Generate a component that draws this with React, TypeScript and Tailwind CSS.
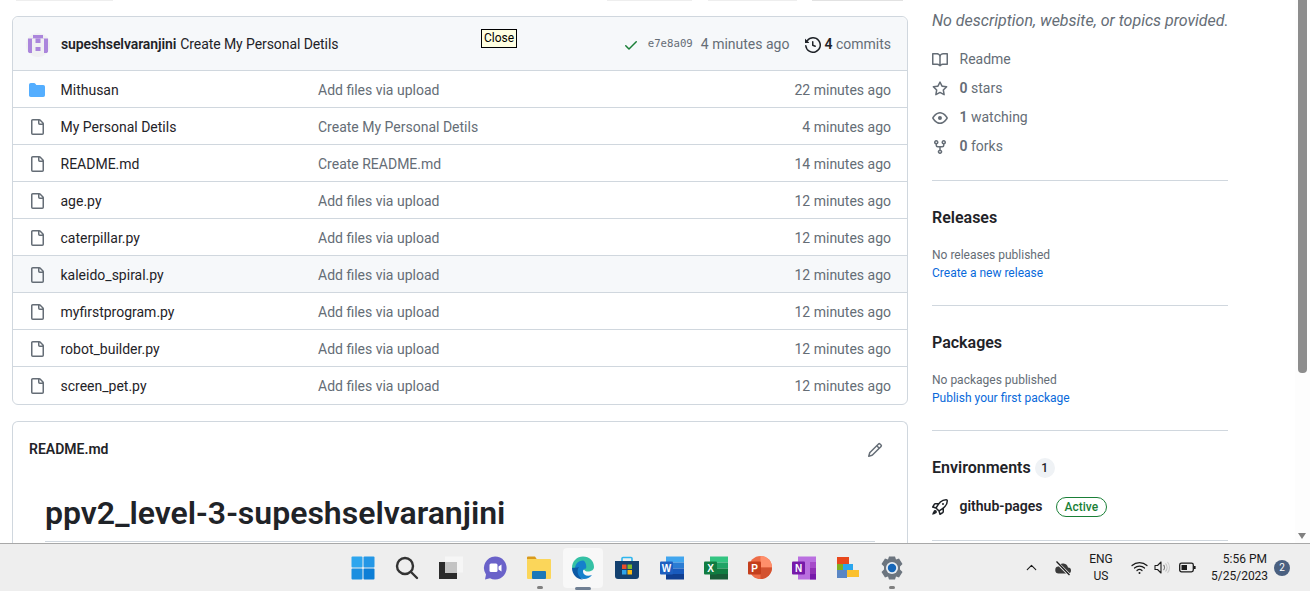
import React from "react";
import { ChevronUp } from "lucide-react";

const rows = [
  ["Mithusan", "Add files via upload", "22 minutes ago"],
  ["My Personal Detils", "Create My Personal Detils", "4 minutes ago"],
  ["README.md", "Create README.md", "14 minutes ago"],
  ["age.py", "Add files via upload", "12 minutes ago"],
  ["caterpillar.py", "Add files via upload", "12 minutes ago"],
  ["kaleido_spiral.py", "Add files via upload", "12 minutes ago"],
  ["myfirstprogram.py", "Add files via upload", "12 minutes ago"],
  ["robot_builder.py", "Add files via upload", "12 minutes ago"],
  ["screen_pet.py", "Add files via upload", "12 minutes ago"],
];

function Octicon({ d, className, fill = "currentColor" }: { d: string; className?: string; fill?: string }) {
  return (
    <svg width="16" height="16" viewBox="0 0 16 16" fill={fill} className={className}>
      <path d={d} />
    </svg>
  );
}

const P = {
  folder: "M1.75 1A1.75 1.75 0 0 0 0 2.75v10.5C0 14.216.784 15 1.75 15h12.5A1.75 1.75 0 0 0 16 13.25v-8.5A1.75 1.75 0 0 0 14.25 3H7.5a.25.25 0 0 1-.2-.1l-.9-1.2C6.07 1.26 5.55 1 5 1H1.75Z",
  file: "M2 1.75C2 .784 2.784 0 3.75 0h6.586c.464 0 .909.184 1.237.513l2.914 2.914c.329.328.513.773.513 1.237v9.586A1.75 1.75 0 0 1 13.25 16h-9.5A1.75 1.75 0 0 1 2 14.25Zm1.75-.25a.25.25 0 0 0-.25.25v12.5c0 .138.112.25.25.25h9.5a.25.25 0 0 0 .25-.25V6h-2.75A1.75 1.75 0 0 1 9 4.25V1.5Zm6.75.062V4.25c0 .138.112.25.25.25h2.688l-.011-.013-2.914-2.914-.013-.011Z",
  book: "M0 1.75A.75.75 0 0 1 .75 1h4.253c1.227 0 2.317.59 3 1.501A3.743 3.743 0 0 1 11.006 1h4.245a.75.75 0 0 1 .75.75v10.5a.75.75 0 0 1-.75.75h-4.507a2.25 2.25 0 0 0-1.591.659l-.622.621a.75.75 0 0 1-1.06 0l-.622-.621A2.25 2.25 0 0 0 5.258 13H.75a.75.75 0 0 1-.75-.75Zm7.251 10.324.004-5.073-.002-2.253A2.25 2.25 0 0 0 5.003 2.5H1.5v9h3.757a3.75 3.75 0 0 1 1.994.574ZM8.755 4.75l-.004 7.322a3.752 3.752 0 0 1 1.992-.572H14.5v-9h-3.495a2.25 2.25 0 0 0-2.25 2.25Z",
  star: "M8 .25a.75.75 0 0 1 .673.418l1.882 3.815 4.21.612a.75.75 0 0 1 .416 1.279l-3.046 2.97.719 4.192a.751.751 0 0 1-1.088.791L8 12.347l-3.766 1.98a.75.75 0 0 1-1.088-.79l.72-4.194L.818 6.374a.75.75 0 0 1 .416-1.28l4.21-.611L7.327.668A.75.75 0 0 1 8 .25Zm0 2.445L6.615 5.5a.75.75 0 0 1-.564.41l-3.097.45 2.24 2.184a.75.75 0 0 1 .216.664l-.528 3.084 2.769-1.456a.75.75 0 0 1 .698 0l2.77 1.456-.53-3.084a.75.75 0 0 1 .216-.664l2.24-2.183-3.096-.45a.75.75 0 0 1-.564-.41L8 2.694Z",
  eye: "M8 2c1.981 0 3.671.992 4.933 2.078 1.27 1.091 2.187 2.345 2.637 3.023a1.62 1.62 0 0 1 0 1.798c-.45.678-1.367 1.932-2.637 3.023C11.67 13.008 9.981 14 8 14c-1.981 0-3.671-.992-4.933-2.078C1.797 10.83.88 9.576.43 8.898a1.62 1.62 0 0 1 0-1.798c.45-.677 1.367-1.931 2.637-3.022C4.33 2.992 6.019 2 8 2ZM1.679 7.932a.12.12 0 0 0 0 .136c.411.622 1.241 1.75 2.366 2.717C5.176 11.758 6.527 12.5 8 12.5c1.473 0 2.825-.742 3.955-1.715 1.124-.967 1.954-2.096 2.366-2.717a.12.12 0 0 0 0-.136c-.412-.621-1.242-1.75-2.366-2.717C10.824 4.242 9.473 3.5 8 3.5c-1.473 0-2.825.742-3.955 1.715-1.124.967-1.954 2.096-2.366 2.717ZM8 10a2 2 0 1 1-.001-3.999A2 2 0 0 1 8 10Z",
  fork: "M5 5.372v.878c0 .414.336.75.75.75h4.5a.75.75 0 0 0 .75-.75v-.878a2.25 2.25 0 1 1 1.5 0v.878a2.25 2.25 0 0 1-2.25 2.25h-1.5v2.128a2.251 2.251 0 1 1-1.5 0V8.5h-1.5A2.25 2.25 0 0 1 3.5 6.25v-.878a2.25 2.25 0 1 1 1.5 0ZM5 3.25a.75.75 0 1 0-1.5 0 .75.75 0 0 0 1.5 0Zm6.75.75a.75.75 0 1 0 0-1.5.75.75 0 0 0 0 1.5Zm-3 8.75a.75.75 0 1 0-1.5 0 .75.75 0 0 0 1.5 0Z",
  rocket: "M14.064 0h.186C15.216 0 16 .784 16 1.75v.186a8.752 8.752 0 0 1-2.564 6.186l-.458.459c-.314.314-.641.616-.979.904v3.207c0 .608-.315 1.172-.833 1.49l-2.774 1.707a.749.749 0 0 1-1.11-.418l-.954-3.102a1.214 1.214 0 0 1-.145-.125L3.754 9.816a1.218 1.218 0 0 1-.124-.145L.528 8.717a.749.749 0 0 1-.418-1.11l1.71-2.774A1.748 1.748 0 0 1 3.31 4h3.204c.288-.338.59-.665.904-.979l.459-.458A8.749 8.749 0 0 1 14.064 0ZM8.938 3.623h-.002l-.458.458c-.76.76-1.437 1.598-2.02 2.5l-1.5 2.317 2.143 2.143 2.317-1.5c.902-.583 1.74-1.26 2.499-2.02l.459-.458a7.25 7.25 0 0 0 2.123-5.127V1.75a.25.25 0 0 0-.25-.25h-.186a7.249 7.249 0 0 0-5.125 2.123ZM3.56 14.56c-.732.732-2.334 1.045-3.005 1.148a.234.234 0 0 1-.201-.064.234.234 0 0 1-.064-.201c.103-.671.416-2.273 1.15-3.003a1.75 1.75 0 1 1 2.12 2.12Zm6.94-3.935c-.088.06-.177.118-.266.175l-2.35 1.521.548 1.783 1.949-1.2a.25.25 0 0 0 .119-.213ZM3.678 8.116 5.2 5.766c.058-.09.117-.178.176-.266H3.309a.25.25 0 0 0-.213.119l-1.2 1.95ZM12 5a1 1 0 1 1-2 0 1 1 0 0 1 2 0Z",
  history: "M1.643 3.143 .427 1.927A.25.25 0 0 0 0 2.104V5.75c0 .138.112.25.25.25h3.646a.25.25 0 0 0 .177-.427L2.715 4.215a6.5 6.5 0 1 1-1.18 4.458.75.75 0 1 0-1.493.154 8.001 8.001 0 1 0 1.6-5.684ZM7.75 4a.75.75 0 0 1 .75.75v2.992l2.028.812a.75.75 0 0 1-.557 1.392l-2.5-1A.751.751 0 0 1 7 8.25v-3.5A.75.75 0 0 1 7.75 4Z",
  pencil: "M11.013 1.427a1.75 1.75 0 0 1 2.474 0l1.086 1.086a1.75 1.75 0 0 1 0 2.474l-8.61 8.61c-.21.21-.47.364-.756.445l-3.251.93a.75.75 0 0 1-.927-.928l.929-3.25c.081-.286.235-.547.445-.758l8.61-8.61Zm.176 4.823L9.75 4.81l-6.286 6.287a.253.253 0 0 0-.064.108l-.558 1.953 1.953-.558a.253.253 0 0 0 .108-.064Zm1.238-3.763a.25.25 0 0 0-.354 0L10.811 3.75l1.439 1.44 1.263-1.263a.25.25 0 0 0 0-.354Z",
  check: "M13.78 4.22a.75.75 0 0 1 0 1.06l-7.25 7.25a.75.75 0 0 1-1.06 0L2.22 9.28a.751.751 0 0 1 .018-1.042.751.751 0 0 1 1.042-.018L6 10.94l6.72-6.72a.75.75 0 0 1 1.06 0Z",
};

function Avatar() {
  return (
    <svg width="24" height="24" viewBox="0 0 24 24" className="rounded-full">
      <rect width="24" height="24" fill="#f0f0f2" />
      <g fill="#ab86dc">
        <rect x="7" y="2" width="10" height="3.500" />
        <rect x="2" y="5.500" width="20" height="4.500" />
        <rect x="2" y="10" width="4" height="10" />
        <rect x="18" y="10" width="4" height="10" />
        <rect x="9.500" y="14" width="5" height="4" />
      </g>
      <g fill="#f0f0f2">
        <rect x="6" y="5.500" width="3.500" height="4.500" />
        <rect x="14.500" y="5.500" width="3.500" height="4.500" />
      </g>
    </svg>
  );
}

function Row({ r, hover }: { r: string[]; hover: boolean }) {
  return (
    <div className={`flex h-[37px] items-center border-t border-[#d0d7de] pl-4 pr-4 pt-[2px] ${hover ? "bg-[#f6f8fa]" : ""}`}>
      <div className="flex w-[31.500px] shrink-0">
        {r[0] === "Mithusan" ? <Octicon d={P.folder} fill="#54aeff" /> : <Octicon d={P.file} fill="#656d76" />}
      </div>
      <div className="w-[257.500px] shrink-0 text-[#1f2328]">{r[0]}</div>
      <div className="flex-1 text-[#656d76]">{r[1]}</div>
      <div className="text-[#656d76]">{r[2]}</div>
    </div>
  );
}

function Stat({ icon, children }: { icon: string; children: React.ReactNode }) {
  return (
    <div className="flex h-[29px] items-center text-[#656d76]">
      <div className="flex w-[27.500px] shrink-0"><Octicon d={icon} /></div>
      <div>{children}</div>
    </div>
  );
}

function Section({ title, text, link }: { title: string; text: string; link: string }) {
  return (
    <div className="mt-[23px] border-t border-[#d0d7de] pt-[25px]">
      <div className="text-[16px] font-semibold leading-[24px]">{title}</div>
      <div className="mt-[16px] text-[12px] leading-[18px] text-[#656d76]">{text}</div>
      <div className="text-[12px] leading-[18px] text-[#0969da]">{link}</div>
    </div>
  );
}

function Taskbar() {
  const icon = "flex h-[40px] w-[40px] items-center justify-center";
  return (
    <div className="relative flex h-[48px] shrink-0 items-center border-t border-[#a8a8a8] bg-[#eeeeee]">
      <div className="ml-[343px] flex items-center gap-[4.080px]">
        <div className={icon}>
          <svg width="24" height="24" viewBox="0 0 24 24">
            <rect x="0.500" y="0.500" width="11" height="11" rx="1" fill="#2ea6ee" />
            <rect x="12.500" y="0.500" width="11" height="11" rx="1" fill="#2497e6" />
            <rect x="0.500" y="12.500" width="11" height="11" rx="1" fill="#1b8fe0" />
            <rect x="12.500" y="12.500" width="11" height="11" rx="1" fill="#0c7ed6" />
          </svg>
        </div>
        <div className={icon}>
          <svg width="24" height="24" viewBox="0 0 24 24" fill="none" stroke="#333" strokeWidth="2.400" strokeLinecap="round">
            <circle cx="10" cy="10" r="8" />
            <path d="M16 16l6 6" />
          </svg>
        </div>
        <div className={icon}>
          <svg width="24" height="24" viewBox="0 0 24 24">
            <rect x="6" y="0.500" width="18" height="16" fill="#f6f6f6" />
            <rect x="6" y="6" width="12" height="11" fill="#c4c4c4" />
            <path d="M0 6h6v11h12v6H0z" fill="#2b2b2b" />
          </svg>
        </div>
        <div className={icon}>
          <svg width="24" height="24" viewBox="0 0 24 24">
            <path d="M12 0.500a11.500 11.500 0 1 1-5 21.800L2 23.500l1-5A11.500 11.500 0 0 1 12 0.500Z" fill="#6a62c9" />
            <rect x="6.500" y="7.500" width="8" height="8.500" rx="1.500" fill="#fff" />
            <path d="M15.500 10.500l3-2v7l-3-2z" fill="#fff" />
          </svg>
        </div>
        <div className={icon}>
          <svg width="24" height="24" viewBox="0 0 24 24">
            <path d="M0 1.500a1 1 0 0 1 1-1h7l2 3h-10z" fill="#d99a1c" />
            <rect x="0" y="3" width="24" height="20" rx="1" fill="#fbd65a" />
            <rect x="5" y="15" width="14" height="8" rx="1" fill="#1c78b8" />
          </svg>
        </div>
        <div className="relative flex h-[40px] w-[40px] items-center justify-center rounded bg-[#f8f8f8]">
          <svg width="24" height="24" viewBox="0 0 24 24">
            <path d="M1 12C1 5 6 0.500 12 0.500c6.500 0 11 4.500 11 10.500 0 3-3 4.500-6 4.500-2 0-3.500-.7-3.500-1.500" fill="#35c1a5" />
            <path d="M12 4.500c-5 0-8 4-8 8.500 0 5 3.500 10 9 10 3 0 6-1.500 8-4-5 2-9 0-9-3.500 0-2 1-3 3-3 1-2-.5-8-3-8Z" fill="#1580cc" />
            <path d="M1 12c0 6 4.500 11.500 11 11.500C7 21 5 15 8 11 5.500 12 3 11.500 1 12Z" fill="#0c59a4" />
          </svg>
          <div className="absolute bottom-[-2px] left-[12px] h-[3px] w-[16px] rounded bg-[#6f7f93]" />
        </div>
        <div className={icon}>
          <svg width="24" height="24" viewBox="0 0 24 24">
            <path d="M7 6V2.500a1 1 0 0 1 1-1h8a1 1 0 0 1 1 1V6" fill="none" stroke="#2fb6ee" strokeWidth="1.600" />
            <path d="M0 5h24v15a3 3 0 0 1-3 3H3a3 3 0 0 1-3-3z" fill="#12406f" />
            <rect x="7" y="8.500" width="4.500" height="4.500" fill="#ea4e2a" />
            <rect x="12.500" y="8.500" width="4.500" height="4.500" fill="#7fbb2d" />
            <rect x="7" y="14" width="4.500" height="4.500" fill="#2da4ea" />
            <rect x="12.500" y="14" width="4.500" height="4.500" fill="#fbb911" />
          </svg>
        </div>
        <div className={icon}>
          <svg width="24" height="24" viewBox="0 0 24 24">
            <rect x="6" y="0.500" width="18" height="6" fill="#41a5ee" />
            <rect x="6" y="6.500" width="18" height="6" fill="#2b7cd3" />
            <rect x="6" y="12.500" width="18" height="5.500" fill="#185abd" />
            <rect x="6" y="18" width="18" height="5.500" fill="#103f91" />
            <rect x="0" y="5.500" width="13" height="13" rx="1" fill="#1e5fc0" />
            <text x="6.500" y="15.500" fill="#fff" fontSize="10" fontWeight="700" textAnchor="middle" fontFamily="Liberation Sans">W</text>
          </svg>
        </div>
        <div className={icon}>
          <svg width="24" height="24" viewBox="0 0 24 24">
            <rect x="6" y="0.500" width="18" height="6" fill="#33c481" />
            <rect x="6" y="6.500" width="18" height="6" fill="#21a366" />
            <rect x="6" y="12.500" width="18" height="5.500" fill="#107c41" />
            <rect x="6" y="18" width="18" height="5.500" fill="#185c37" />
            <rect x="0" y="5.500" width="13" height="13" rx="1" fill="#107c41" />
            <text x="6.500" y="15.500" fill="#fff" fontSize="10" fontWeight="700" textAnchor="middle" fontFamily="Liberation Sans">X</text>
          </svg>
        </div>
        <div className={icon}>
          <svg width="24" height="24" viewBox="0 0 24 24">
            <circle cx="12.500" cy="11.500" r="11.500" fill="#ed6c47" />
            <path d="M12.500 0a11.500 11.500 0 0 1 11.500 11.500H12.500z" fill="#ff8f6b" />
            <path d="M12.500 11.500H24A11.500 11.500 0 0 1 12.500 23z" fill="#d35230" />
            <rect x="0" y="5.500" width="13" height="13" rx="1" fill="#c43e1c" />
            <text x="6.500" y="15.500" fill="#fff" fontSize="10" fontWeight="700" textAnchor="middle" fontFamily="Liberation Sans">P</text>
          </svg>
        </div>
        <div className={icon}>
          <svg width="24" height="24" viewBox="0 0 24 24">
            <rect x="6" y="0.500" width="18" height="23" fill="#ba6fe0" />
            <rect x="18" y="6" width="6" height="6" fill="#a64ac9" />
            <rect x="18" y="12" width="6" height="6" fill="#8f2fb5" />
            <rect x="18" y="18" width="6" height="5.500" fill="#7719aa" />
            <rect x="0" y="5.500" width="13" height="13" rx="1" fill="#7719aa" />
            <text x="6.500" y="15.500" fill="#fff" fontSize="10" fontWeight="700" textAnchor="middle" fontFamily="Liberation Sans">N</text>
          </svg>
        </div>
        <div className={icon}>
          <svg width="24" height="24" viewBox="0 0 24 24">
            <rect x="1" y="1" width="12" height="7" fill="#e8481c" />
            <rect x="1" y="8" width="6" height="6" fill="#7fae1d" />
            <rect x="7" y="8" width="10" height="6" fill="#2aa6ee" />
            <rect x="1" y="14" width="10" height="8" fill="#5a86c4" />
            <rect x="11" y="14" width="12" height="7" fill="#fbc02d" />
          </svg>
        </div>
        <div className={icon}>
          <svg width="24" height="24" viewBox="0 0 24 24">
            <path d="M9 0.500h6l1 3 3-1 3.500 5.500-2.500 2.500v3l2.500 2.500-3.500 5.500-3-1-1 3H9l-1-3-3 1-3.500-5.500 2.500-2.500v-3L1.500 8 5 2.500l3 1z" fill="#6c757f" />
            <circle cx="12" cy="12" r="6" fill="#e8edf2" />
            <circle cx="12" cy="12" r="4.200" fill="#1666b8" />
          </svg>
        </div>
      </div>
      <div className="absolute bottom-[2px] left-[537px] h-[3px] w-[6px] rounded bg-[#808080]" />
      <div className="absolute bottom-[2px] left-[889px] h-[3px] w-[6px] rounded bg-[#808080]" />
      <div className="ml-auto flex items-center text-[#1a1a1a]">
        <ChevronUp size={17} strokeWidth={1.600} className="mr-[14.500px]" />
        <svg width="18" height="18" viewBox="0 0 18 18" className="mr-[16px]">
          <path d="M5 14.500a3.500 3.500 0 0 1-.5-7 5 5 0 0 1 9.500 1 3 3 0 0 1 0 6z" fill="#3a3a3a" />
          <path d="M2 2.500l13.500 13.500" stroke="#eeeeee" strokeWidth="3" />
          <path d="M2.500 2.500L15.500 16" stroke="#1a1a1a" strokeWidth="1.300" />
        </svg>
        <div className="mr-[16.500px] w-[26px] text-center text-[12px] leading-[17px]">
          ENG
          <br />
          US
        </div>
        <svg width="17" height="17" viewBox="0 0 17 17" fill="none" stroke="#1a1a1a" strokeWidth="1.200" strokeLinecap="round" className="mr-[6px]">
          <path d="M1 6.500a11 11 0 0 1 15 0" />
          <path d="M3.500 9a7.500 7.500 0 0 1 10 0" />
          <path d="M6 11.500a3.800 3.800 0 0 1 5 0" />
          <circle cx="8.500" cy="14" r="1" fill="#1a1a1a" stroke="none" />
        </svg>
        <svg width="17" height="17" viewBox="0 0 17 17" fill="none" strokeWidth="1.100" className="mr-[8px]">
          <path d="M1 6.500h2.500L7 3v11l-3.500-3.500H1z" stroke="#1a1a1a" strokeLinejoin="round" />
          <path d="M9.500 6a3.500 3.500 0 0 1 0 5" stroke="#777" />
          <path d="M11.500 4.500a6 6 0 0 1 0 8" stroke="#bbb" />
          <path d="M13.500 3a8.500 8.500 0 0 1 0 11" stroke="#ccc" />
        </svg>
        <svg width="17" height="17" viewBox="0 0 17 17" className="mr-[15.500px]">
          <rect x="0.700" y="4.200" width="13.600" height="8.600" rx="1.800" fill="none" stroke="#1a1a1a" strokeWidth="1.300" />
          <rect x="2.500" y="6" width="5.500" height="5" fill="#1a1a1a" />
          <rect x="15" y="7" width="1.600" height="3" fill="#1a1a1a" />
        </svg>
        <div className="w-[56px] whitespace-nowrap text-right text-[12px] leading-[17px]">
          5:56 PM
          <br />
          5/25/2023
        </div>
        <div className="ml-[7px] mr-[20px] flex h-[16px] w-[16px] items-center justify-center rounded-full bg-[#4a6080] text-[10px] text-white">2</div>
      </div>
    </div>
  );
}

export default function App() {
  return (
    <div
      className="relative flex h-[591px] w-[1310px] flex-col overflow-hidden bg-white text-[14px] text-[#1f2328]"
      style={{ fontFamily: 'Roboto, "Open Sans", sans-serif' }}
    >
      <div className="relative flex min-h-0 flex-1 overflow-hidden">
        <div className="ml-[12px] flex w-[896px] shrink-0 flex-col">
          <div className="relative h-[16px] shrink-0">
            <div className="flex h-[1px]">
              <div className="ml-[4px] w-[97px] bg-[#eeeeee]" />
              <div className="ml-[494px] w-[85px] bg-[#eeeeee]" />
              <div className="ml-[16px] w-[89px] bg-[#eeeeee]" />
              <div className="ml-[15px] w-[91px] bg-[#e2e2e2]" />
            </div>
          </div>
          <div className="rounded-md border border-[#d0d7de] pb-[1px]">
            <div className="flex h-[53px] items-center rounded-t-md bg-[#f6f8fa] pl-[13px] pr-[16px] pt-[2px]">
              <Avatar />
              <div className="ml-[11px] font-semibold tracking-[-0.100px]">supeshselvaranjini</div>
              <div className="ml-[4px] tracking-[-0.080px]">Create My Personal Detils</div>
              <div className="ml-auto flex items-center text-[#656d76]">
                <Octicon d={P.check} fill="#1a7f37" />
                <span className="ml-[9px] text-[10.700px]" style={{ fontFamily: '"DejaVu Sans Mono", monospace' }}>e7e8a09</span>
                <span className="ml-[8px]">4 minutes ago</span>
                <Octicon d={P.history} className="ml-[16px] text-[#1f2328]" />
                <span className="ml-[3px]"><b className="font-semibold text-[#1f2328]">4</b> commits</span>
              </div>
            </div>
            {rows.map((r) => (
              <Row key={r[0]} r={r} hover={r[0] === "kaleido_spiral.py"} />
            ))}
          </div>
          <div className="mt-[16px] flex-1 rounded-t-md border border-b-0 border-[#d0d7de] px-[16px]">
            <div className="flex h-[54px] items-center justify-between">
              <div className="font-semibold">README.md</div>
              <Octicon d={P.pencil} className="mr-[8px] mt-[1px] text-[#656d76]" />
            </div>
            <div className="mx-[16px] mt-[17px] border-b border-[#d0d7de] pb-[8px] text-[32px] font-semibold leading-[40px]">ppv2_level-3-supeshselvaranjini</div>
          </div>
        </div>
        <div className="ml-[24px] flex w-[296px] shrink-0 flex-col">
          <div className="h-[45px] whitespace-nowrap pt-[9px] text-[16px] italic text-[#656d76]">No description, website, or topics provided.</div>
          <Stat icon={P.book}>Readme</Stat>
          <Stat icon={P.star}><b className="font-semibold">0</b> stars</Stat>
          <Stat icon={P.eye}><b className="font-semibold">1</b> watching</Stat>
          <Stat icon={P.fork}><b className="font-semibold">0</b> forks</Stat>
          <div className="h-[19px] shrink-0" />
          <div className="border-t border-[#d0d7de] pt-[25px]">
            <div className="text-[16px] font-semibold leading-[24px]">Releases</div>
            <div className="mt-[16px] text-[12px] leading-[18px] text-[#656d76]">No releases published</div>
            <div className="text-[12px] leading-[18px] text-[#0969da]">Create a new release</div>
          </div>
          <Section title="Packages" text="No packages published" link="Publish your first package" />
          <div className="mt-[23px] border-t border-[#d0d7de] pt-[25px]">
            <div className="flex items-center text-[16px] font-semibold leading-[24px]">
              Environments
              <span className="ml-[4px] flex h-[20px] w-[20px] items-center justify-center rounded-full bg-[#eff2f5] text-[12px] font-medium">1</span>
            </div>
            <div className="mt-[16px] flex items-center">
              <Octicon d={P.rocket} className="mr-[11.500px]" />
              <span className="font-semibold">github-pages</span>
              <span className="ml-[13px] rounded-full border border-[#1a7f37] px-[8px] text-[12px] font-medium leading-[18px] text-[#1a7f37]">Active</span>
            </div>
            <div className="mt-[23px] border-t border-[#d0d7de]" />
          </div>
        </div>
        <div className="absolute right-0 top-0 bottom-0 w-[15px] bg-[#fdfdfd]">
          <div className="ml-[3px] h-[373px] w-[9px] rounded-b-[4px] bg-[#8d8d8d]" />
          <div className="absolute bottom-[4px] left-[3px] h-0 w-0 border-x-[4px] border-t-[6px] border-x-transparent border-t-[#808080]" />
        </div>
        <div className="absolute left-[481px] top-[29px] border border-black bg-[#ffffe1] px-[2px] text-[12px] leading-[17px] text-black">Close</div>
      </div>
      <Taskbar />
    </div>
  );
}
